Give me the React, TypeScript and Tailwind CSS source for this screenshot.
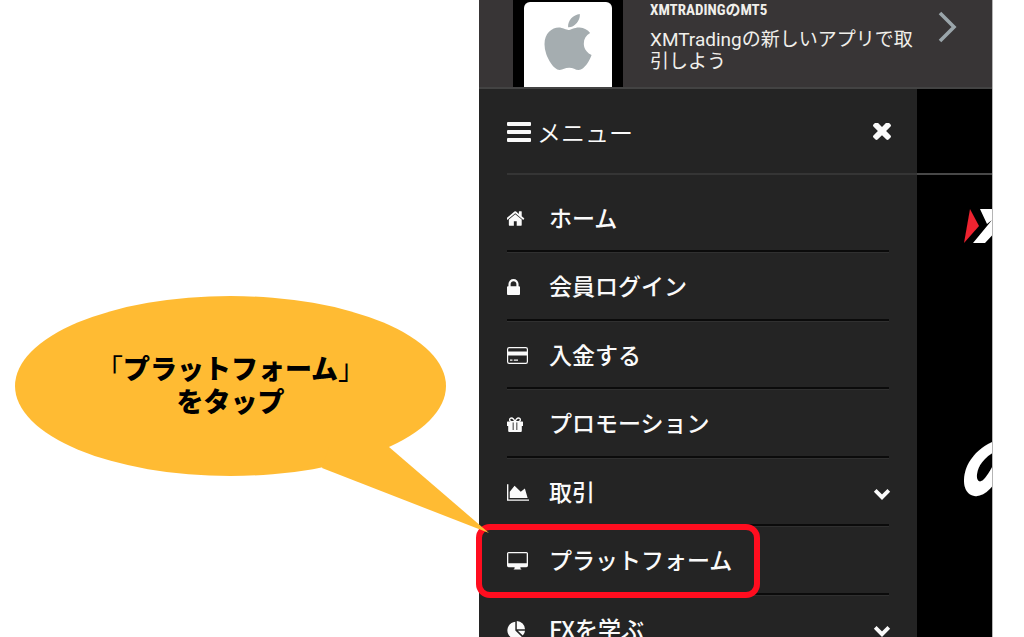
import type { ReactNode } from "react";
import { FaApple } from "react-icons/fa";

type MenuItem = {
  label: string;
  icon: ReactNode;
  expandable?: boolean;
  highlighted?: boolean;
};

const HomeIcon = () => (
  <svg viewBox="90 250 1612 1290" className="h-[15px] w-[18px] fill-current">
    <path d="M1408 992v480q0 26-19 45t-45 19h-384v-384h-256v384h-384q-26 0-45-19t-19-45v-480q0-1 .5-3t.5-3l575-474 575 474q1 2 1 6zm223-69l-62 74q-8 9-21 11h-3q-13 0-21-7l-692-577-692 577q-12 8-24 7-13-2-21-11l-62-74q-8-10-7-23.5t11-21.5l719-599q32-26 76-26t76 26l244 204v-195q0-14 9-23t23-9h192q14 0 23 9t9 23v408l219 182q10 8 11 21.5t-7 23.5z" />
  </svg>
);

const LockIcon = () => (
  <svg viewBox="320 128 1152 1408" className="h-4 w-[13px] fill-current">
    <path d="M640 768h512v-192q0-106-75-181t-181-75-181 75-75 181v192zm832 96v576q0 40-28 68t-68 28h-960q-40 0-68-28t-28-68v-576q0-40 28-68t68-28h32v-192q0-184 132-316t316-132 316 132 132 316v192h32q40 0 68 28t28 68z" />
  </svg>
);

const CardIcon = () => (
  <svg viewBox="0 0 21 17" className="h-[17px] w-[21px] fill-current">
    <rect x="0.6" y="0.6" width="19.8" height="15.8" rx="1.6" fill="none" stroke="currentColor" strokeWidth="1.2" />
    <path d="M0.5 4.5h20v4h-20zM3 12.6h2.5v1.2H3zM6.8 12.6h4.2v1.2H6.8z" />
  </svg>
);

const GiftIcon = () => (
  <svg viewBox="0 0 16 15" className="h-[15px] w-4">
    <path
      d="M8 4.6C7 2.4 6 1 4.6 1 3.4 1 2.6 1.8 2.6 2.8S3.4 4.6 4.6 4.6H8h3.4c1.2 0 2-.8 2-1.8S12.6 1 11.4 1C10 1 9 2.4 8 4.6"
      fill="none"
      stroke="currentColor"
      strokeWidth="1.3"
    />
    <path
      d="M.5 4.5h15q.5 0 .5.5v4h-1.2v4.9q0 1-1 1H2.2q-1 0-1-1V9H0V5q0-.5.5-.5zM5.7 5.2V13h.9V5.2zM9.4 5.2V13h.9V5.2z"
      fill="currentColor"
      fillRule="evenodd"
    />
  </svg>
);

const ChartIcon = () => (
  <svg viewBox="0 128 2048 1536" className="h-[17px] w-[22px] fill-current">
    <path d="M2048 1536v128h-2048v-1536h128v1408h1920zm-384-1024l256 896h-1664v-576l448-576 576 576z" />
  </svg>
);

const MonitorIcon = () => (
  <svg viewBox="0 0 21 18" className="h-[18px] w-[21px] fill-current">
    <path
      fillRule="evenodd"
      d="M1.6 0h17.8Q21 0 21 1.6v12Q21 15.2 19.4 15.2H13.4v1.2q1 .2 1 1.2H6.600q0-1 1-1.200v-1.200H1.600Q0 15.200 0 13.600v-12Q0 0 1.600 0zM1.300 1.200v10h18.400v-10z"
    />
  </svg>
);

const PieIcon = () => (
  <svg viewBox="0 0 18 18" className="h-[18px] w-[18px] fill-current">
    <path d="M8.3.8V9.600l6.400 6.200A8.600 8.600 0 1 1 8.300.8z" />
    <path d="M9.800 0a8.300 8.300 0 0 1 8.200 8.300H9.800zM10.900 9.700H18a8.400 8.400 0 0 1-2.200 4.900z" />
  </svg>
);

const ChevronDown = () => (
  <svg viewBox="0 0 18 12" className="-mr-0.5 mt-1 h-3 w-[18px]">
    <path d="M2.2 2.4L9 9.2l6.800-6.800" fill="none" stroke="currentColor" strokeWidth="3.8" />
  </svg>
);

const menuItems: MenuItem[] = [
  { label: "ホーム", icon: <HomeIcon /> },
  { label: "会員ログイン", icon: <LockIcon /> },
  { label: "入金する", icon: <CardIcon /> },
  { label: "プロモーション", icon: <GiftIcon /> },
  { label: "取引", icon: <ChartIcon />, expandable: true },
  { label: "プラットフォーム", icon: <MonitorIcon />, highlighted: true },
  { label: "FXを学ぶ", icon: <PieIcon />, expandable: true },
];

function AppBanner() {
  return (
    <a href="#app" className="flex h-[89px] shrink-0 overflow-hidden border-b-2 border-[#434343] bg-[#383536] px-[34px]">
      <div className="h-[89px] w-[110px] shrink-0 bg-black px-[11px] pt-0.5">
        <div className="flex h-[100px] justify-center rounded-md bg-white pt-2 text-[#a5adb0]">
          <FaApple className="h-[64px] w-[52px]" />
        </div>
      </div>
      <div className="ml-[27px] flex-1 text-[#f0efeb]">
        <p className="font-['Roboto_Condensed','Noto_Sans_CJK_JP',sans-serif] text-[15px] font-bold leading-5">
          XMTRADINGのMT5
        </p>
        <p className="mt-[9px] pr-3 font-[Roboto,'Noto_Sans_CJK_JP',sans-serif] text-[19px] leading-[22px]">
          XMTradingの新しいアプリで取引しよう
        </p>
      </div>
      <svg viewBox="0 0 20 32" className="mt-[11px] h-8 w-5 shrink-0 text-[#9aa5aa]">
        <path d="M2 2l14 14L2 30" fill="none" stroke="currentColor" strokeWidth="3.6" />
      </svg>
    </a>
  );
}

function MenuRow({ label, icon, expandable, highlighted }: MenuItem) {
  return (
    <li className="relative h-[68px] shrink-0 border-b border-[#303030] even:h-[69px]">
      <a href="#menu" className="flex h-full items-center border-b-2 border-[#0b0b0b]">
        <span className="w-[42px] shrink-0 pt-0.5">{icon}</span>
        <span className="flex-1 pb-0.5 text-[23px] font-medium leading-8">{label}</span>
        {expandable && <ChevronDown />}
      </a>
      {highlighted && (
        <span className="absolute -left-[31px] -top-[3px] h-[74px] w-[284px] rounded-[14px] border-6 border-[#ff0d1f]" />
      )}
    </li>
  );
}

function Drawer() {
  return (
    <nav className="flex w-[438px] shrink-0 flex-col bg-[#242424] pl-7 text-[#fafafa]">
      <div className="flex h-[86px] shrink-0 items-center border-b-2 border-[#353535] pr-[26px] pt-0.5">
        <svg viewBox="0 0 24 20" className="h-5 w-6 fill-current">
          <rect width="24" height="4" rx="1" />
          <rect y="8" width="24" height="4" rx="1" />
          <rect y="16" width="24" height="4" rx="1" />
        </svg>
        <h2 className="ml-1.5 flex-1 text-2xl font-[350]">メニュー</h2>
        <button type="button" aria-label="閉じる">
          <svg viewBox="302 430 1188 1188" className="h-[18px] w-[18px] fill-current">
            <path d="M1490 1322q0 40-28 68l-136 136q-28 28-68 28t-68-28l-294-294-294 294q-28 28-68 28t-68-28l-136-136q-28-28-28-68t28-68l294-294-294-294q-28-28-28-68t28-68l136-136q28-28 68-28t68 28l294 294 294-294q28-28 68-28t68 28l136 136q28 28 28 68t-28 68l-294 294 294 294q28 28 28 68z" />
          </svg>
        </button>
      </div>
      <ul className="flex flex-col pr-7 pt-[10px]">
        {menuItems.map((item) => (
          <MenuRow key={item.label} {...item} />
        ))}
      </ul>
    </nav>
  );
}

function PageBehind() {
  return (
    <div className="flex-1 overflow-hidden bg-black text-white">
      <div className="h-[86px] border-b-2 border-[#484848]" />
      <svg viewBox="0 0 70 34" className="ml-[47px] mt-[34px] h-[34px] w-[70px]">
        <path d="M6 0l9 17L0 34z" fill="#ee2330" />
        <path d="M16 0h12l5 8L41 0h12L21 34H9L28 11l-5 4z" fill="#fff" />
      </svg>
      <p className="ml-[38px] mt-[176px] text-[78px] font-black italic leading-[88px]">の</p>
    </div>
  );
}

function Callout() {
  return (
    <div className="relative z-10 ml-[15px] mt-[296px] flex h-[180px] w-[431px] items-center justify-center">
      <svg viewBox="0 0 431 180" className="absolute inset-0 h-full w-full overflow-visible fill-[#ffbb33]">
        <ellipse cx="215.5" cy="90" rx="215.5" ry="90" />
        <path d="M307 172l167 65-100-86-60 0z" />
      </svg>
      <p className="relative pb-1 text-center text-[27px] font-black leading-[33px] text-black">
        <span className="font-normal">「</span>プラットフォーム<span className="font-normal">」</span>
        <br />
        をタップ
      </p>
    </div>
  );
}

export default function App() {
  return (
    <main className="flex h-screen overflow-hidden bg-white font-['Noto_Sans_CJK_JP',sans-serif]">
      <section className="min-w-0 flex-1">
        <Callout />
      </section>
      <section className="flex w-[514px] shrink-0 flex-col border-r border-[#b5b5b5]">
        <AppBanner />
        <div className="flex min-h-0 flex-1">
          <Drawer />
          <PageBehind />
        </div>
      </section>
      <div className="w-[31px] shrink-0" />
    </main>
  );
}
